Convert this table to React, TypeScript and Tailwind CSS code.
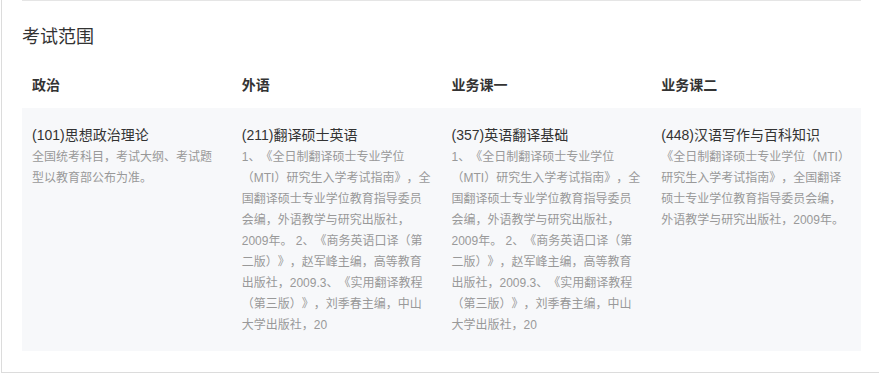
const columns = [
  {
    head: "政治",
    title: "(101)思想政治理论",
    desc: "全国统考科目，考试大纲、考试题型以教育部公布为准。",
  },
  {
    head: "外语",
    title: "(211)翻译硕士英语",
    desc: "1、《全日制翻译硕士专业学位（MTI）研究生入学考试指南》，全国翻译硕士专业学位教育指导委员会编，外语教学与研究出版社，2009年。 2、《商务英语口译（第二版）》，赵军峰主编，高等教育出版社，2009.3、《实用翻译教程（第三版）》，刘季春主编，中山大学出版社，20",
  },
  {
    head: "业务课一",
    title: "(357)英语翻译基础",
    desc: "1、《全日制翻译硕士专业学位（MTI）研究生入学考试指南》，全国翻译硕士专业学位教育指导委员会编，外语教学与研究出版社，2009年。 2、《商务英语口译（第二版）》，赵军峰主编，高等教育出版社，2009.3、《实用翻译教程（第三版）》，刘季春主编，中山大学出版社，20",
  },
  {
    head: "业务课二",
    title: "(448)汉语写作与百科知识",
    desc: "《全日制翻译硕士专业学位（MTI）研究生入学考试指南》，全国翻译硕士专业学位教育指导委员会编，外语教学与研究出版社，2009年。",
  },
];

export default function App() {
  return (
    <div className="w-[879px] h-[373px] bg-white font-['Liberation_Sans','Noto_Sans_CJK_SC',sans-serif] [text-spacing-trim:space-all]">
      <div className="ml-px h-[373px] border-l border-b border-[#dcdcdc] pl-[20px] pr-[18px]">
        <div className="h-px bg-[#e5e5e5]" />
        <h3 className="mt-[23px] text-[18px] leading-[27px] text-[#333]">考试范围</h3>

        <div className="mt-[12px]">
          <div className="grid grid-cols-4 h-[45px]">
            {columns.map((c) => (
              <div key={c.head} className="px-[10px] flex items-center text-[14px] font-bold text-[#333]">
                {c.head}
              </div>
            ))}
          </div>

          <div className="grid grid-cols-4 bg-[#f7f8fa]">
            {columns.map((c) => (
              <div key={c.title} className="px-[10px] pt-[15px] pb-[15px]">
                <p className="text-[14px] leading-[24px] text-[#333]">{c.title}</p>
                <p className="text-[12px] leading-[21px] text-[#999]">{c.desc}</p>
              </div>
            ))}
          </div>
        </div>
      </div>
    </div>
  );
}
